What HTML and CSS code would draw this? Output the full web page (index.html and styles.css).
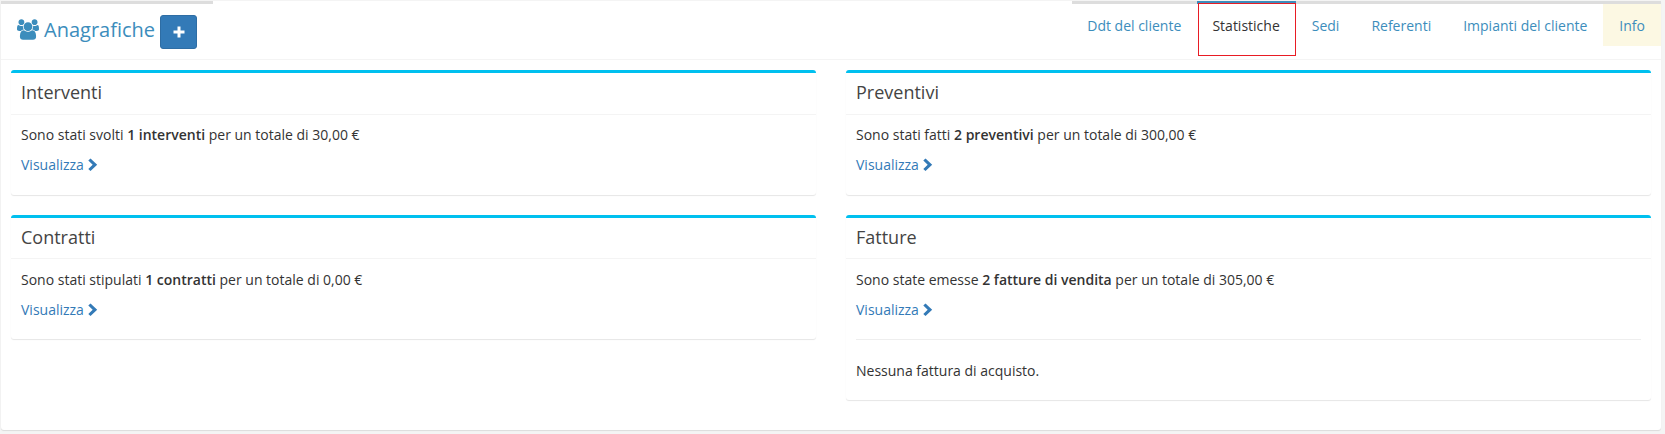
FILE: index.html
```html
<!DOCTYPE html>
<html lang="it">
<head>
<meta charset="utf-8">
<title>Anagrafiche</title>
<link rel="stylesheet" href="styles.css">
</head>
<body>
<svg class="defs" width="0" height="0">
  <symbol id="chevron" viewBox="0 0 10 14"><path d="M0.300 2.500L2.500 0.400L9.200 6.700L2.500 13.100L0.300 11L4.700 6.700Z"/></symbol>
</svg>
<main class="panel">
  <header class="tabs">
    <div class="brand">
      <svg class="users" viewBox="0 0 1920 1792"><path d="M593 896q-162 5-265 128H194q-82 0-138-40.500T0 865q0-353 124-353 6 0 43.500 21t97.500 42.500T384 597q67 0 133-23-5 37-5 66 0 139 81 256zm1071 637q0 120-73 189.500t-194 69.500H523q-121 0-194-69.500T256 1533q0-53 3.500-103.500t14-109T300 1212t43-97.500 62-81 85.500-53.500T602 960q10 0 43 21.500t73 48 107 48 135 21.500 135-21.500 107-48 73-48 43-21.500q61 0 111.500 20t85.500 53.500 62 81 43 97.500 26.500 108.500 14 109 3.500 103.500zM640 256q0 106-75 181t-181 75-181-75-75-181 75-181T384 0t181 75 75 181zm704 384q0 159-112.500 271.500T960 1024 688.500 911.500 576 640t112.500-271.500T960 256t271.500 112.500T1344 640zm576 225q0 78-56 118.500t-138 40.500h-134q-103-123-265-128 81-117 81-256 0-29-5-66 66 23 133 23 59 0 119-21.500t97.500-42.500 43.500-21q124 0 124 353zm-128-609q0 106-75 181t-181 75-181-75-75-181 75-181 181-75 181 75 75 181z"/></svg>
      <span class="brand-name">Anagrafiche</span>
      <button class="add" aria-label="Aggiungi"><svg viewBox="0 0 12 12"><path d="M4.500 0.500h3v4h4v3h-4v4h-3v-4h-4v-3h4z"/></svg></button>
    </div>
    <nav class="tab-list">
      <a class="tab">Ddt del cliente</a>
      <a class="tab active">Statistiche</a>
      <a class="tab">Sedi</a>
      <a class="tab">Referenti</a>
      <a class="tab">Impianti del cliente</a>
      <a class="tab info">Info</a>
    </nav>
  </header>
  <div class="grid">
    <section class="box">
      <h3>Interventi</h3>
      <div class="body">
        <p>Sono stati svolti <b>1 interventi</b> per un totale di 30,00 €</p>
        <p><a class="link">Visualizza <svg><use href="#chevron"/></svg></a></p>
      </div>
    </section>
    <section class="box">
      <h3>Preventivi</h3>
      <div class="body">
        <p>Sono stati fatti <b>2 preventivi</b> per un totale di 300,00 €</p>
        <p><a class="link">Visualizza <svg><use href="#chevron"/></svg></a></p>
      </div>
    </section>
    <section class="box lower">
      <h3>Contratti</h3>
      <div class="body">
        <p>Sono stati stipulati <b>1 contratti</b> per un totale di 0,00 €</p>
        <p><a class="link">Visualizza <svg><use href="#chevron"/></svg></a></p>
      </div>
    </section>
    <section class="box lower">
      <h3>Fatture</h3>
      <div class="body">
        <p>Sono state emesse <b>2 fatture di vendita</b> per un totale di 305,00 €</p>
        <p><a class="link">Visualizza <svg><use href="#chevron"/></svg></a></p>
        <hr>
        <p>Nessuna fattura di acquisto.</p>
      </div>
    </section>
  </div>
</main>
</body>
</html>
```
FILE: styles.css
```css
* { box-sizing: border-box; }
html, body { height: 100%; }
body {
  margin: 0;
  padding: 1px 4px 4px 1px;
  background: #f4f4f4;
  font: 14px/20px "Open Sans", "Noto Sans", sans-serif;
  color: #333;
  overflow: hidden;
}
.defs { display: block; }
.panel {
  height: 429px;
  background: #fff;
  border-radius: 0 0 3px 3px;
  box-shadow: 0 1px 1px rgba(0, 0, 0, .1);
}
.tabs {
  display: flex;
  justify-content: space-between;
  height: 59px;
  border-bottom: 1px solid #f4f4f4;
}
.brand {
  display: flex;
  width: 212px;
  padding: 11px 0 0 16px;
  border-top: 3px solid #ddd;
  color: #3c8dbc;
  font-size: 20px;
}
.users { width: 22px; height: 21px; margin-top: 4px; fill: #3c8dbc; }
.brand-name { margin: 5px 0 0 5px; width: 116px; white-space: nowrap; }
.add {
  flex: none;
  display: flex;
  align-items: center;
  justify-content: center;
  width: 37px;
  height: 34px;
  padding: 0 0 0 1px;
  background: #337ab7;
  border: 1px solid #2e6da4;
  border-radius: 3px;
}
.add svg { width: 12px; height: 12px; fill: #fff; }
.tab-list { display: flex; }
.tab {
  height: 45px;
  padding: 12px 16px 0;
  border-top: 3px solid #ddd;
  color: #3c8dbc;
  white-space: nowrap;
}
.tab:first-child { padding-left: 15.3px; }
.tab.active {
  position: relative;
  padding-left: 15.2px;
  border-top-color: #3c8dbc;
  color: #333;
}
.tab.active::after {
  content: "";
  position: absolute;
  top: -1px;
  left: 1px;
  right: 0;
  height: 53px;
  border: 1px solid #e81c24;
  box-sizing: border-box;
}
.tab.info { background: #fcf8e3; background-clip: padding-box; }
.grid {
  display: grid;
  grid-template-columns: 1fr 1fr;
  align-items: start;
  gap: 20px 30px;
  padding: 10px 10px 0;
}
.box {
  border-top: 3px solid #00c0ef;
  border-radius: 3px;
  box-shadow: 0 1px 1px rgba(0, 0, 0, .1);
}
.box h3 {
  height: 42px;
  margin: 0;
  padding: 9px 10px 0;
  border-bottom: 1px solid #f4f4f4;
  color: #444;
  font-size: 18px;
  font-weight: 400;
}
.body { padding: 10px; }
.body p { margin: 0 0 10px; }
.body b { font-weight: 600; }
.lower h3 { height: 41px; }
.lower .body { padding: 11px 10px 9px; }
.body hr { margin: 19px 0 21px; border: 0; border-top: 1px solid #eee; }
.link { color: #337ab7; }
.link svg { width: 10px; height: 14px; fill: #337ab7; vertical-align: -2px; }
```
